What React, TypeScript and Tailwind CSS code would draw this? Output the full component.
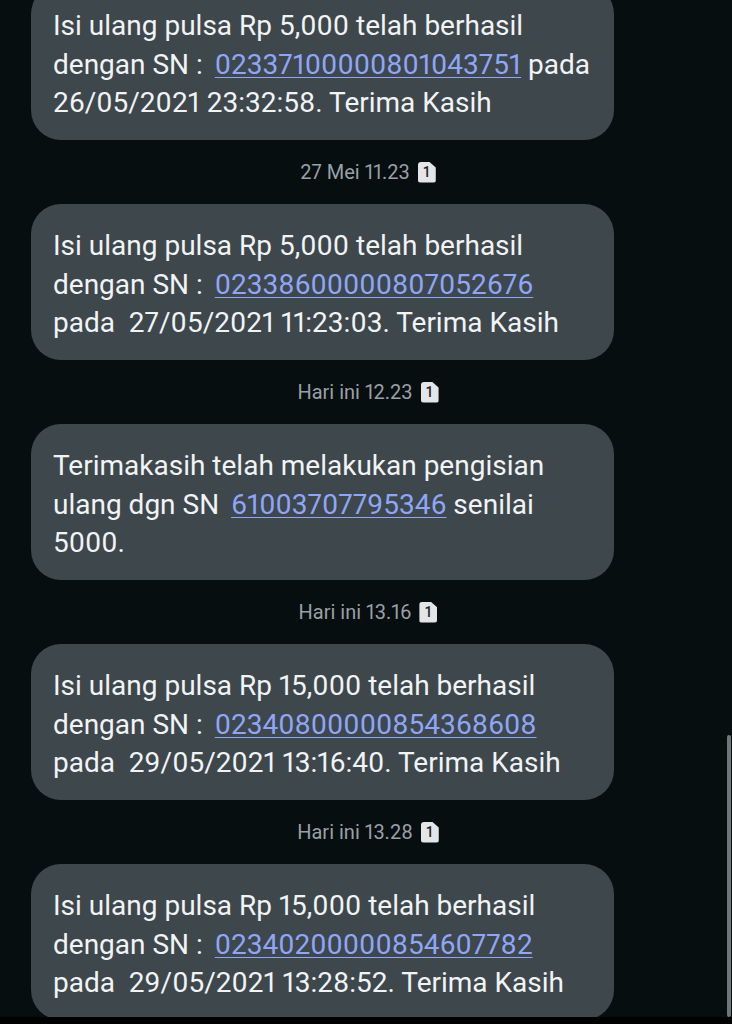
import React from "react";

// Riwayat SMS isi ulang pulsa — tampilan gelap
type Part = string | { sn: string };
type Msg = { lines: Part[][]; stamp?: string };

const msgs: Msg[] = [
  {
    lines: [
      ["Isi ulang pulsa Rp 5,000 telah berhasil"],
      ["dengan SN : ", { sn: "02337100000801043751" }, " pada"],
      ["26/05/2021 23:32:58. Terima Kasih"],
    ],
    stamp: "27 Mei 11.23",
  },
  {
    lines: [
      ["Isi ulang pulsa Rp 5,000 telah berhasil"],
      ["dengan SN : ", { sn: "02338600000807052676" }],
      ["pada\u00a0 27/05/2021 11:23:03. Terima Kasih"],
    ],
    stamp: "Hari ini 12.23",
  },
  {
    lines: [
      ["Terimakasih telah melakukan pengisian"],
      ["ulang dgn SN ", { sn: "61003707795346" }, " senilai"],
      ["5000."],
    ],
    stamp: "Hari ini 13.16",
  },
  {
    lines: [
      ["Isi ulang pulsa Rp 15,000 telah berhasil"],
      ["dengan SN : ", { sn: "02340800000854368608" }],
      ["pada\u00a0 29/05/2021 13:16:40. Terima Kasih"],
    ],
    stamp: "Hari ini 13.28",
  },
  {
    lines: [
      ["Isi ulang pulsa Rp 15,000 telah berhasil"],
      ["dengan SN : ", { sn: "02340200000854607782" }],
      ["pada\u00a0 29/05/2021 13:28:52. Terima Kasih"],
    ],
  },
];

function Bubble({ m }: { m: Msg }) {
  return (
    <div className="ml-[31px] w-[583px] h-[156px] shrink-0 rounded-[30px] bg-[#3d474c] px-[22px] pt-[23px]">
      {m.lines.map((ln, i) => (
        <div
          key={i}
          className="whitespace-nowrap text-[28px] leading-[38.5px] text-[#f1f3f4] proportional-nums"
        >
          {ln.map((p, j) =>
            typeof p === "string" ? (
              <span key={j}>{p}</span>
            ) : (
              <span
                key={j}
                className="ml-[5px] text-[#8fa6f7] underline underline-offset-[3px] decoration-1"
              >
                {p.sn}
              </span>
            )
          )}
        </div>
      ))}
    </div>
  );
}

function Stamp({ text }: { text: string }) {
  return (
    <div className="h-[64px] flex items-center justify-center gap-[8px] pl-[4px]">
      <span className="text-[20px] text-[#9aa0a6] proportional-nums">{text}</span>
      <span className="grid h-[21px] w-[18px] place-items-center rounded-[3px] bg-[#e3e5e8] text-[14px] font-medium leading-none text-[#1f2326] [clip-path:polygon(0_0,62%_0,100%_28%,100%_100%,0_100%)]">
        1
      </span>
    </div>
  );
}

export default function App() {
  return (
    <div
      className="relative h-[1024px] w-[732px] overflow-hidden bg-[#060e10]"
      style={{ fontFamily: "Roboto, 'Noto Sans', sans-serif" }}
    >
      <div className="flex flex-col mt-[-16px]">
        {msgs.map((m, i) => (
          <React.Fragment key={i}>
            <Bubble m={m} />
            {m.stamp && <Stamp text={m.stamp} />}
          </React.Fragment>
        ))}
      </div>
      {/* scrollbar */}
      <div className="absolute right-[1px] top-[735px] h-[282px] w-[4px] rounded-full bg-[#6f777d]" />
      <div className="absolute bottom-0 left-0 h-[7px] w-full bg-[#000000]" />
    </div>
  );
}
